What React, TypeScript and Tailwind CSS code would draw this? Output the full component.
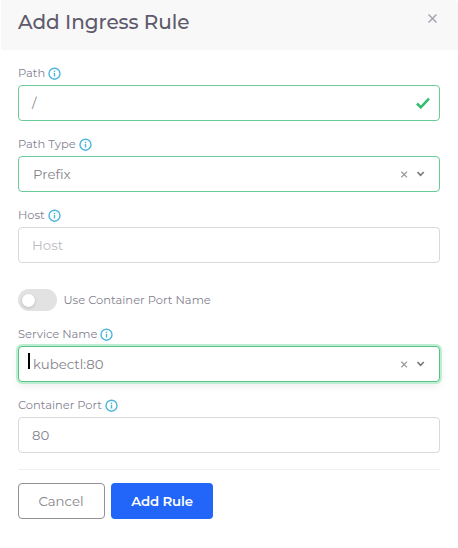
import type { ReactNode } from 'react';

function InfoIcon() {
  return (
    <svg width="13" height="13" viewBox="0 0 13 13" fill="none" className="mb-px shrink-0">
      <circle cx="6.5" cy="6.7" r="5.5" stroke="#4bb5dc" strokeWidth="1.4" />
      <path d="M6.5 5.9v3.6" stroke="#4bb5dc" strokeWidth="1.4" />
      <path d="M6.5 3.7v1.4" stroke="#4bb5dc" strokeWidth="1.4" />
    </svg>
  );
}

function Label({ text }: { text: string }) {
  return (
    <div className="flex h-[23px] items-center pt-px text-[11.5px] leading-none text-[#84828f]">
      <span className="mr-[3px] whitespace-nowrap tracking-[-0.03px]">{text}</span>
      <InfoIcon />
    </div>
  );
}

function Box({ className, children }: { className: string; children: ReactNode }) {
  return (
    <div className={`flex h-9 items-center rounded-[4px] border bg-white text-[13.3px] leading-none ${className}`}>
      {children}
    </div>
  );
}

function SelectControls() {
  return (
    <div className="mr-[14px] ml-auto flex items-center gap-[9px]">
      <svg width="7" height="7" viewBox="0 0 7 7" stroke="#97979b" strokeWidth="1.2">
        <path d="M.4.7l5.6 5.6M6 .7L.4 6.3" />
      </svg>
      <svg width="8" height="6" viewBox="0 0 8 6" fill="none" stroke="#77777c" strokeWidth="1.6">
        <path d="M.5 1l3.1 3.3L6.8 1" />
      </svg>
    </div>
  );
}

export default function App() {
  return (
    <div className="h-[548px] w-[458px] overflow-hidden bg-white font-['Montserrat','Inter',sans-serif]">
      <header className="ml-px flex h-[50px] items-start justify-between rounded-tr-[4px] bg-[#f8f8f8] pr-[21.5px] pl-[17px]">
        <h1 className="mt-[10px] text-[20px] leading-6 font-medium tracking-[-0.05px] whitespace-nowrap text-[#5e5a6c]">
          Add Ingress Rule
        </h1>
        <svg className="mt-[14px]" width="9" height="9" viewBox="0 0 9 9" stroke="#a5a4b0" strokeWidth="1.5">
          <path d="M.5.5l8 8M8.5.5l-8 8" />
        </svg>
      </header>

      <main className="mr-[18px] ml-[18px] flex flex-col pt-3">
        <Label text="Path" />
        <Box className="border-[#6bcb98] pl-[13px] text-[#85838c]">
          <span className="mt-[2px]">/</span>
          <svg className="mr-[9px] ml-auto" width="14" height="12" viewBox="0 0 14 12" fill="none" stroke="#32bd70" strokeWidth="2.6">
            <path d="M1 6.5l3.8 3.8L13 1.7" />
          </svg>
        </Box>

        <div className="h-3" />
        <Label text="Path Type" />
        <Box className="border-[#6bcb98] pl-[14px] text-[#85838c]">
          <span className="mt-[2px]">Prefix</span>
          <SelectControls />
        </Box>

        <div className="h-3" />
        <Label text="Host" />
        <Box className="border-[#d9d9dc] pl-[13px] text-[#bcbcc3]">
          <span className="mt-[2px]">Host</span>
        </Box>

        <div className="mt-[26px] mb-3 flex h-[22px] items-center">
          <div className="flex h-[22px] w-[39px] items-center rounded-full bg-[#e2e2e2] pl-[3.5px]">
            <div className="size-[13px] rounded-full bg-white shadow-[0_1px_3px_rgba(0,0,0,0.18)]" />
          </div>
          <span className="mt-px ml-[6.5px] text-[11.5px] leading-none whitespace-nowrap text-[#84828f]">
            Use Container Port Name
          </span>
        </div>

        <Label text="Service Name" />
        <Box className="border-[#56c486] pl-[9px] text-[#85838c] shadow-[0_0_0_2px_#bdeed2,0_4px_9px_rgba(0,0,0,0.08)]">
          <span className="mr-[3px] mb-[6px] h-[16px] w-[2px] bg-black" />
          <span className="mt-[2px]">kubectl:80</span>
          <SelectControls />
        </Box>

        <div className="h-3" />
        <Label text="Container Port" />
        <Box className="border-[#d9d9dc] pl-[13px] text-[#85838c]">
          <span className="mt-[2px]">80</span>
        </Box>

        <div className="mt-4 h-px bg-[#f0f0f1]" />
        <div className="mt-[13px] flex gap-[6px]">
          <button className="h-9 w-[87px] rounded-[4px] border border-[#929296] pt-[2px] pr-px text-[13.3px] leading-none text-[#85858a]">
            Cancel
          </button>
          <button className="h-9 w-[102px] rounded-[4px] bg-[#2166f8] pt-[2px] text-[13.3px] leading-none font-semibold tracking-[-0.15px] text-white">
            Add Rule
          </button>
        </div>
      </main>
    </div>
  );
}
